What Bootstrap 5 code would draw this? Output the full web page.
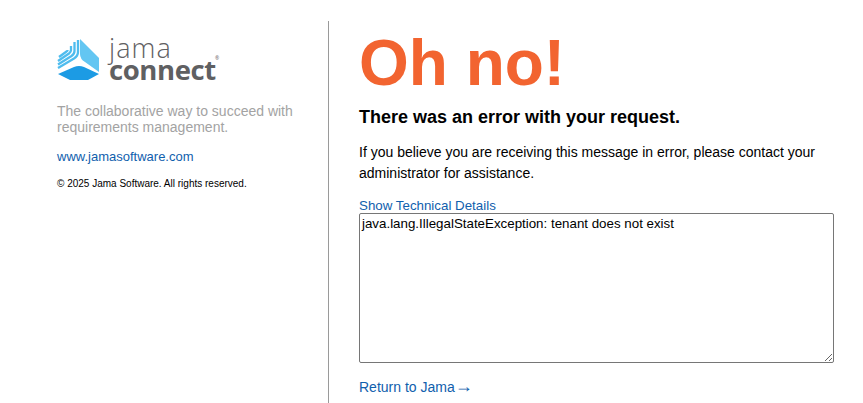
<!DOCTYPE html>
<html lang="en">
<head>
    <meta charset="UTF-8">
    <title>Error</title>
    <link href="https://cdn.jsdelivr.net/npm/bootstrap@5.3.2/dist/css/bootstrap.min.css" rel="stylesheet">
    <style>
        html, body { height: 403px; overflow: hidden; }
        body { font-family: "Liberation Sans", Arial, sans-serif; color: #000; background: #fff; }
        a { color: #1060ad; text-decoration: none; }
        .page-wrap { width: 863px; height: 403px; padding-top: 21px; }
        .side-col { width: 329px; height: 382px; border-right: 1px solid #9a9a9a; padding: 16px 0 0 57px; flex: none; }
        .main-col { padding-left: 30px; width: 505px; flex: none; }
        .logo-row { height: 46px; margin-bottom: 20px; }
        .logo-text { margin-left: 9px; width: 115px; color: #5f6062; font-family: "Open Sans", sans-serif; position: relative; }
        .logo-top { font-weight: 300; font-size: 27px; line-height: 22px; height: 20px; letter-spacing: 1.1px; }
        .logo-bottom { font-weight: 700; font-size: 27.5px; line-height: 26px; letter-spacing: -.4px; }
        .logo-reg { position: absolute; left: 106px; top: 18px; font-size: 5px; line-height: 6px; }
        .tagline { font-size: 14px; line-height: 16px; color: #a3a3a3; margin: 0 0 14px; }
        .site-link { font-size: 13px; line-height: 16px; margin-bottom: 13px; }
        .copy-line { font-size: 10px; line-height: 12px; margin: 0; }
        .big-title { font-size: 64px; line-height: 72px; font-weight: 700; color: #f26430; margin: 0 0 6px; padding-top: 6px; font-family: "Liberation Sans", Arial, sans-serif; }
        .sub-title { font-size: 18px; line-height: 24px; font-weight: 700; margin: 0 0 13px; font-family: "Liberation Sans", sans-serif; }
        .msg-text { font-size: 14px; line-height: 21px; margin: 0 0 15px; }
        .tech-link { font-size: 13.33px; line-height: 14px; display: block; }
        .tech-box { display: block; width: 475px; height: 150px; border: 1px solid #767676; border-radius: 2px; padding: 2px; font-family: "Liberation Sans", sans-serif; font-size: 13.33px; line-height: 16px; color: #000; outline: 0; margin-bottom: 16px; }
        .return-link { font-size: 14px; line-height: 17px; display: block; }
        .return-arrow { font-size: 18px; line-height: 14px; }
    </style>
</head>
<body>

<div class="page-wrap d-flex">
    <!-- Left panel -->
    <div class="side-col">
        <div class="logo-row d-flex align-items-center">
            <svg width="43" height="44" viewBox="0 0 43 44" aria-hidden="true">
                <!-- left wing, striped -->
                <path d="M21 2V14q0 4-4 6.500L1 30M17.500 4V13q0 3-3 5L1 26.500M14 8V12q0 2-2 3.500L1 23M10.500 12V12.500q0 .5-1 1L2 19" fill="none" stroke="#4fbcee" stroke-width="2.300"/>
                <!-- right wing -->
                <path d="M23 1L42 20V34L28 24q-5-3-5-8z" fill="#63c6f2"/>
                <!-- base -->
                <path d="M1 36L17 29q5-2 10 0L42 36 31 42H13z" fill="#1c9be4"/>
            </svg>
            <div class="logo-text">
                <div class="logo-top">jama</div>
                <div class="logo-bottom">connect</div>
                <span class="logo-reg">®</span>
            </div>
        </div>
        <p class="tagline">The collaborative way to succeed with requirements management.</p>
        <div class="site-link"><a href="#">www.jamasoftware.com</a></div>
        <p class="copy-line">© 2025 Jama Software. All rights reserved.</p>
    </div>

    <!-- Error message -->
    <div class="main-col">
        <h1 class="big-title">Oh no!</h1>
        <h2 class="sub-title">There was an error with your request.</h2>
        <p class="msg-text">If you believe you are receiving this message in error, please contact your administrator for assistance.</p>
        <a href="#" class="tech-link">Show Technical Details</a>
        <textarea class="tech-box" spellcheck="false">java.lang.IllegalStateException: tenant does not exist</textarea>
        <a href="#" class="return-link">Return to Jama<span class="return-arrow">→</span></a>
    </div>
</div>

<script src="https://cdn.jsdelivr.net/npm/bootstrap@5.3.2/dist/js/bootstrap.bundle.min.js"></script>
</body>
</html>
